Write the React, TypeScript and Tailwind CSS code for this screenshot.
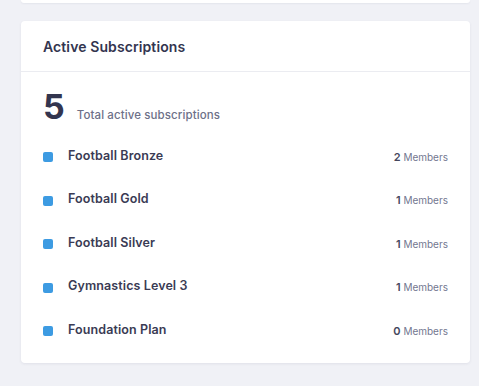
const subscriptions = [
  { name: "Football Bronze", members: 2 },
  { name: "Football Gold", members: 1 },
  { name: "Football Silver", members: 1 },
  { name: "Gymnastics Level 3", members: 1 },
  { name: "Foundation Plan", members: 0 },
];

const App = () => {
  return (
    <div
      className="w-[479px] h-[386px] bg-[#f0f1f6] overflow-hidden"
      style={{ fontFamily: "Inter, 'Noto Sans', sans-serif" }}
    >
      <div className="ml-[21px] w-[449px] h-[3px] bg-white rounded-b-[4px] shadow-[0_1px_2px_rgba(40,44,80,0.06)]" />

      <div className="ml-[21px] mt-[18px] w-[449px] bg-white rounded-[4px] shadow-[0_1px_3px_rgba(40,44,80,0.08)]">
        <div className="h-[51px] flex items-center px-[22px] border-b border-[#ebecf1]">
          <p className="text-[14px] font-semibold text-[#33354f] tracking-[0.1px]">
            Active Subscriptions
          </p>
        </div>

        <div className="px-[22px] pt-[18px] pb-[11px]">
          <div className="flex items-baseline gap-[12px] mb-[10px]">
            <p className="text-[34px] leading-none font-bold text-[#33354f]">5</p>
            <p className="text-[11.5px] font-medium text-[#6d7088] tracking-[0.1px]">
              Total active subscriptions
            </p>
          </div>

          <div className="flex flex-col">
            {subscriptions.map((sub, index) => (
              <div key={index} className="h-[43.5px] flex items-center">
                <span className="w-[10px] h-[10px] rounded-[2px] bg-[#3d9be2] mt-[2px]" />
                <p className="ml-[15px] text-[12.5px] font-semibold text-[#3a3b54] tracking-[0.1px]">
                  {sub.name}
                </p>
                <p className="ml-auto mt-[2px] text-[#737790] text-[10px]">
                  <span className="text-[11px] font-semibold text-[#44465c]">
                    {sub.members}
                  </span>{" "}
                  Members
                </p>
              </div>
            ))}
          </div>
        </div>
      </div>
    </div>
  );
};

export default App;
